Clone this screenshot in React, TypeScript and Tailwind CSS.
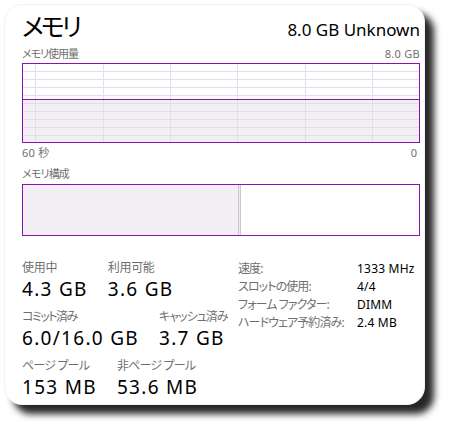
import React from "react";

const font = "[font-family:'Noto_Sans','Noto_Sans_CJK_JP',sans-serif] [font-feature-settings:'palt']";

function UsageChart() {
  const W = 398;
  const H = 80;
  const hLines = [8, 16, 24, 32, 40, 48, 56, 64, 72];
  const vLines = [13, 81, 148, 215, 283, 350];
  const usageY = 36.5;
  return (
    <svg width={W} height={H} viewBox={`0 0 ${W} ${H}`} className="block">
      <rect x="0" y="0" width={W} height={H} fill="#ffffff" />
      <rect x="0" y={usageY} width={W} height={H - usageY} fill="#f2eff4" />
      {hLines.map((y) => (
        <line key={"h" + y} x1="0" x2={W} y1={y + 0.5} y2={y + 0.5} stroke="#e4dce8" strokeWidth="1" />
      ))}
      {vLines.map((x) => (
        <line key={"v" + x} x1={x + 0.5} x2={x + 0.5} y1="0" y2={H} stroke="#e4dce8" strokeWidth="1" />
      ))}
      <line x1="0" x2={W} y1={usageY} y2={usageY} stroke="#8b12ae" strokeWidth="1" />
      <rect x="0.5" y="0.5" width={W - 1} height={H - 1} fill="none" stroke="#8b12ae" strokeWidth="1" />
    </svg>
  );
}

function Stat({ label, value, track }: { label: string; value: string; track: string }) {
  return (
    <div className="flex flex-col">
      <div className={`text-[12px] leading-[16px] text-[#6f6f6f] whitespace-nowrap ${track}`}>{label}</div>
      <div className="text-[19px] leading-[24px] text-black mt-[1px] tracking-[1.3px] whitespace-nowrap">{value}</div>
    </div>
  );
}

export default function App() {
  const specs: [string, string][] = [
    ["速度:", "1333 MHz"],
    ["スロットの使用:", "4/4"],
    ["フォーム ファクター:", "DIMM"],
    ["ハードウェア予約済み:", "2.4 MB"],
  ];
  return (
    <div className={`w-[449px] h-[428px] bg-white overflow-hidden ${font}`}>
      <div className="ml-[4px] mt-[4px] w-[421px] h-[401px] bg-white rounded-[18px] border border-[#f2f2f2] shadow-[9px_9px_7px_rgba(0,0,0,0.85)] pl-[17px] pr-[4px] pt-[3px]">
        <div className="flex items-baseline justify-between h-[38px]">
          <div className="text-[25px] leading-[36px] text-black tracking-[-3px]">メモリ</div>
          <div className="text-[17px] leading-[24px] text-black">8.0 GB Unknown</div>
        </div>
        <div className="flex justify-between items-end h-[15px] text-[11px] leading-[14px] text-[#6f6f6f]">
          <span className="tracking-[-1px]">メモリ使用量</span>
          <span className="tracking-[0.3px]">8.0 GB</span>
        </div>
        <div className="mt-[2px]">
          <UsageChart />
        </div>
        <div className="flex justify-between h-[20px] items-center text-[11px] leading-[14px] text-[#6f6f6f] pr-[3px]">
          <span className="tracking-[0.3px]">60 秒</span>
          <span>0</span>
        </div>
        <div className="h-[21px] flex items-center text-[11px] leading-[14px] text-[#6f6f6f] tracking-[-0.8px]">
          メモリ構成
        </div>
        <div className="w-[398px] h-[52px] border border-[#8b12ae] flex">
          <div className="w-[215px] h-full bg-[#f2eff4]" />
          <div className="w-[3px] h-full border-l border-r border-[#c9c9c9] bg-[#ececec]" />
          <div className="flex-1 h-full bg-white" />
        </div>
        <div className="flex mt-[24px]">
          <div className="w-[216px] flex flex-col gap-[8px]">
            <div className="flex gap-[20px]">
              <Stat label="使用中" value="4.3 GB" track="tracking-[-0.3px]" />
              <Stat label="利用可能" value="3.6 GB" track="tracking-[-0.3px]" />
            </div>
            <div className="flex gap-[20px]">
              <Stat label="コミット済み" value="6.0/16.0 GB" track="tracking-[-1.5px]" />
              <Stat label="キャッシュ済み" value="3.7 GB" track="tracking-[-1px]" />
            </div>
            <div className="flex gap-[20px]">
              <Stat label="ページ プール" value="153 MB" track="tracking-[-0.8px]" />
              <Stat label="非ページ プール" value="53.6 MB" track="tracking-[-0.8px]" />
            </div>
          </div>
          <div className="grid grid-cols-[119px_auto] auto-rows-[18px] text-[12px] leading-[18px]">
            {specs.map(([k, v]) => (
              <React.Fragment key={k}>
                <div className="text-[#6f6f6f] tracking-[-0.9px] whitespace-nowrap">{k}</div>
                <div className="text-black tracking-[0.2px]">{v}</div>
              </React.Fragment>
            ))}
          </div>
        </div>
      </div>
    </div>
  );
}
